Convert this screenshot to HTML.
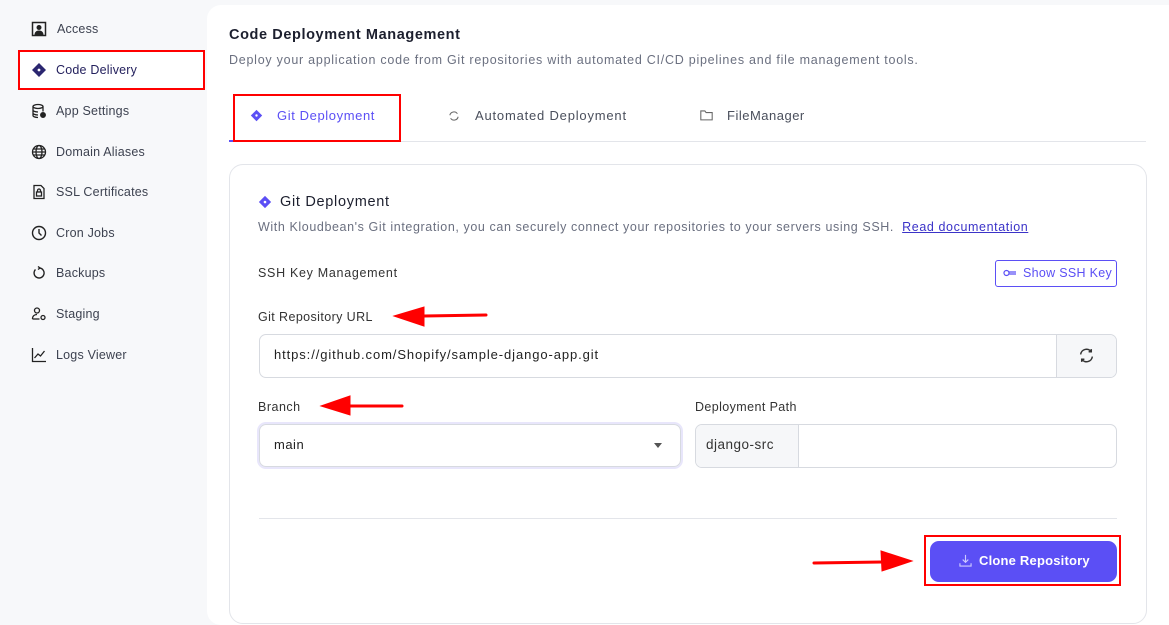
<!DOCTYPE html>
<html><head><style>
*{box-sizing:border-box;margin:0;padding:0}
body{width:1169px;height:605px;overflow:hidden;background:#f7f8fa;font-family:"Liberation Sans",sans-serif;color:#1f2433;position:relative}
.a{position:absolute;white-space:nowrap}
.nav{position:absolute;left:31px;font-size:12.5px;color:#3d4250;display:flex;align-items:center;gap:9px;letter-spacing:0.2px}
.nav svg{width:16px;height:16px}
</style></head><body>
<!-- sidebar -->
<div class="nav" style="top:21px"><svg viewBox="0 0 16 16"><rect x="1.5" y="1.5" width="13" height="13" fill="none" stroke="#222" stroke-width="1.5"/><circle cx="8" cy="6.5" r="2.5" fill="#222"/><path d="M3.5 14c0-3 2-4.5 4.5-4.5s4.5 1.5 4.5 4.5z" fill="#222"/></svg><span style="margin-left:1px">Access</span></div>
<div class="a" style="left:18px;top:50px;width:187px;height:40px;border:2px solid #f00;background:#fff"></div>
<div class="nav" style="top:62px;color:#221f5c"><svg viewBox="0 0 16 16"><path d="M8 1l7 7-7 7-7-7z" fill="#2b2670"/><circle cx="8" cy="8" r="1.4" fill="#fff"/></svg>Code Delivery</div>
<div class="nav" style="top:103px"><svg viewBox="0 0 16 16" fill="none" stroke="#222" stroke-width="1.3"><ellipse cx="7" cy="3.5" rx="5" ry="2"/><path d="M2 3.5v9c0 1 2 2 5 2M12 3.5v5M2 7c0 1 2 2 5 2M2 10c0 1 2 2 5 2"/><circle cx="12" cy="12" r="2.3" fill="#222"/></svg>App Settings</div>
<div class="nav" style="top:144px"><svg viewBox="0 0 16 16" fill="none" stroke="#222" stroke-width="1.3"><circle cx="8" cy="8" r="6.5"/><ellipse cx="8" cy="8" rx="3" ry="6.5"/><path d="M1.5 8h13M2.5 5h11M2.5 11h11"/></svg>Domain Aliases</div>
<div class="nav" style="top:184px"><svg viewBox="0 0 16 16" fill="none" stroke="#222" stroke-width="1.3"><path d="M3 1.5h7l3 3v10H3z"/><rect x="5.5" y="8" width="5" height="4"/><path d="M6.5 8V6.5a1.5 1.5 0 0 1 3 0V8"/></svg>SSL Certificates</div>
<div class="nav" style="top:225px"><svg viewBox="0 0 16 16" fill="none" stroke="#222" stroke-width="1.4"><circle cx="8" cy="8" r="6.5"/><path d="M8 4v4l2.5 2.5"/></svg>Cron Jobs</div>
<div class="nav" style="top:265px"><svg viewBox="0 0 16 16" fill="none" stroke="#222" stroke-width="1.4"><path d="M4.5 4.5a5 5 0 1 0 4-1.5"/><path d="M7 1.5l2 1.5-2 1.5" /></svg>Backups</div>
<div class="nav" style="top:306px"><svg viewBox="0 0 16 16" fill="none" stroke="#222" stroke-width="1.3"><circle cx="6" cy="4.5" r="2.5"/><path d="M1.5 13c0-3 2-4.5 4.5-4.5"/><circle cx="12" cy="11.5" r="2"/><path d="M1.5 13h7"/></svg>Staging</div>
<div class="nav" style="top:347px"><svg viewBox="0 0 16 16" fill="none" stroke="#222" stroke-width="1.3"><path d="M1.5 1v13.5H15"/><path d="M3.5 11l3.5-4 2.5 2 4-5"/></svg>Logs Viewer</div>
<!-- main -->
<div class="a" style="left:207px;top:5px;width:980px;height:620px;background:#fff;border-radius:14px"></div>
<div class="a" style="left:229px;top:27px;font-size:14.5px;font-weight:bold;color:#1c1f2e;letter-spacing:0.6px">Code Deployment Management</div>
<div class="a" style="left:229px;top:53px;font-size:12.5px;color:#6b7080;letter-spacing:0.75px">Deploy your application code from Git repositories with automated CI/CD pipelines and file management tools.</div>
<div class="a" style="left:229px;top:141px;width:917px;height:1px;background:#e3e5ea"></div>
<div class="a" style="left:229px;top:140px;width:165px;height:2px;background:#5b4ff5"></div>
<div class="a" style="left:233px;top:94px;width:168px;height:48px;border:2px solid #f00"></div>
<svg class="a" style="left:250px;top:109px" width="13" height="13" viewBox="0 0 16 16"><path d="M8 1l7 7-7 7-7-7z" fill="#5b4ff5"/><circle cx="8" cy="8" r="1.5" fill="#fff"/></svg>
<div class="a" style="left:277px;top:108px;font-size:13px;color:#5b4ff5;letter-spacing:0.6px">Git Deployment</div>
<svg class="a" style="left:448px;top:110px" width="12" height="12" viewBox="0 0 16 16" fill="none" stroke="#666" stroke-width="1.4"><path d="M2.5 7a5.5 5.5 0 0 1 10-2M13.5 9a5.5 5.5 0 0 1-10 2"/></svg>
<div class="a" style="left:475px;top:108px;font-size:13px;color:#4a4f5c;letter-spacing:0.8px">Automated Deployment</div>
<svg class="a" style="left:700px;top:109px" width="13" height="12" viewBox="0 0 16 14" fill="none" stroke="#666" stroke-width="1.3"><path d="M1 2h5l1.5 2H15v9H1z"/></svg>
<div class="a" style="left:727px;top:108px;font-size:13px;color:#4a4f5c;letter-spacing:0.5px">FileManager</div>
<!-- inner card -->
<div class="a" style="left:229px;top:164px;width:918px;height:460px;border:1px solid #e3e5ea;border-radius:14px"></div>
<svg class="a" style="left:258px;top:195px" width="14" height="14" viewBox="0 0 16 16"><path d="M8 1l7 7-7 7-7-7z" fill="#5b4ff5"/><circle cx="8" cy="8" r="1.5" fill="#fff"/></svg>
<div class="a" style="left:280px;top:194px;font-size:14.5px;color:#1c1f2e;letter-spacing:0.7px">Git Deployment</div>
<div class="a" style="left:258px;top:220px;font-size:12.5px;color:#6b7080;letter-spacing:0.6px">With Kloudbean's Git integration, you can securely connect your repositories to your servers using SSH. &nbsp;<span style="color:#3b33c8;text-decoration:underline">Read documentation</span></div>
<div class="a" style="left:258px;top:266px;font-size:12.5px;color:#333;letter-spacing:0.7px">SSH Key Management</div>
<div class="a" style="left:995px;top:260px;width:122px;height:27px;border:1px solid #5b4ff5;border-radius:3px;font-size:12.5px;color:#5b4ff5;padding:5px 0 0 27px;letter-spacing:0.3px">Show SSH Key</div>
<svg class="a" style="left:1003px;top:268px" width="14" height="10" viewBox="0 0 14 10" fill="none" stroke="#5b4ff5" stroke-width="1.2"><circle cx="3.5" cy="5" r="2.5"/><path d="M6 4h7M6 6h7"/></svg>
<div class="a" style="left:258px;top:310px;font-size:12.5px;color:#333;letter-spacing:0.4px">Git Repository URL</div>
<div class="a" style="left:259px;top:334px;width:858px;height:44px;border:1px solid #d7dae0;border-radius:7px;overflow:hidden"><div style="position:absolute;right:0;top:0;width:60px;height:44px;background:#f6f7f9;border-left:1px solid #d7dae0"></div></div>
<div class="a" style="left:274px;top:347px;font-size:13px;color:#222;letter-spacing:0.9px">https://github.com/Shopify/sample-django-app.git</div>
<svg class="a" style="left:1078px;top:347px" width="17" height="17" viewBox="0 0 16 16" fill="none" stroke="#333" stroke-width="1.4"><path d="M2.5 7a5.5 5.5 0 0 1 10-2.5M12.5 2v2.5H10M13.5 9a5.5 5.5 0 0 1-10 2.5M3.5 14v-2.5H6"/></svg>
<div class="a" style="left:258px;top:400px;font-size:12.5px;color:#333;letter-spacing:0.5px">Branch</div>
<div class="a" style="left:259px;top:424px;width:422px;height:43px;border:1px solid #d7dae0;border-radius:7px;box-shadow:0 0 0 2px #e8e6fb"></div>
<div class="a" style="left:274px;top:437px;font-size:13px;color:#222;letter-spacing:0.5px">main</div>
<div class="a" style="left:654px;top:443px;border:4px solid transparent;border-top:5px solid #555"></div>
<div class="a" style="left:695px;top:400px;font-size:12.5px;color:#333;letter-spacing:0.4px">Deployment Path</div>
<div class="a" style="left:695px;top:424px;width:422px;height:44px;border:1px solid #d7dae0;border-radius:7px;overflow:hidden"><div style="position:absolute;left:0;top:0;width:103px;height:44px;background:#f6f7f9;border-right:1px solid #d7dae0"></div></div>
<div class="a" style="left:706px;top:437px;font-size:13.5px;color:#333;letter-spacing:0.5px">django-src</div>
<div class="a" style="left:259px;top:518px;width:858px;height:1px;background:#e3e5ea"></div>
<div class="a" style="left:924px;top:535px;width:197px;height:51px;border:2px solid #f00"></div>
<div class="a" style="left:930px;top:541px;width:187px;height:41px;background:#5b4ff5;border-radius:9px;color:#fff;font-size:13px;font-weight:bold;padding:12px 0 0 49px;letter-spacing:0.2px">Clone Repository</div>
<svg class="a" style="left:959px;top:554px" width="13" height="13" viewBox="0 0 14 14" fill="none" stroke="#cfcbff" stroke-width="1.2"><path d="M7 1v8M4 6l3 3 3-3M1 10v3h12v-3"/></svg>
<!-- arrows -->
<svg class="a" style="left:0;top:0" width="1169" height="605">
<g fill="#f00" stroke="#f00" stroke-linecap="round">
<path d="M424 316L486 315" stroke-width="3"/><path d="M394 316L424 307L424 326z"/>
<path d="M350 406L402 406" stroke-width="3"/><path d="M321 406L350 396L350 415z"/>
<path d="M814 563L882 562" stroke-width="3"/><path d="M912 561L881 551L882 571z"/>
</g></svg>
</body></html>
